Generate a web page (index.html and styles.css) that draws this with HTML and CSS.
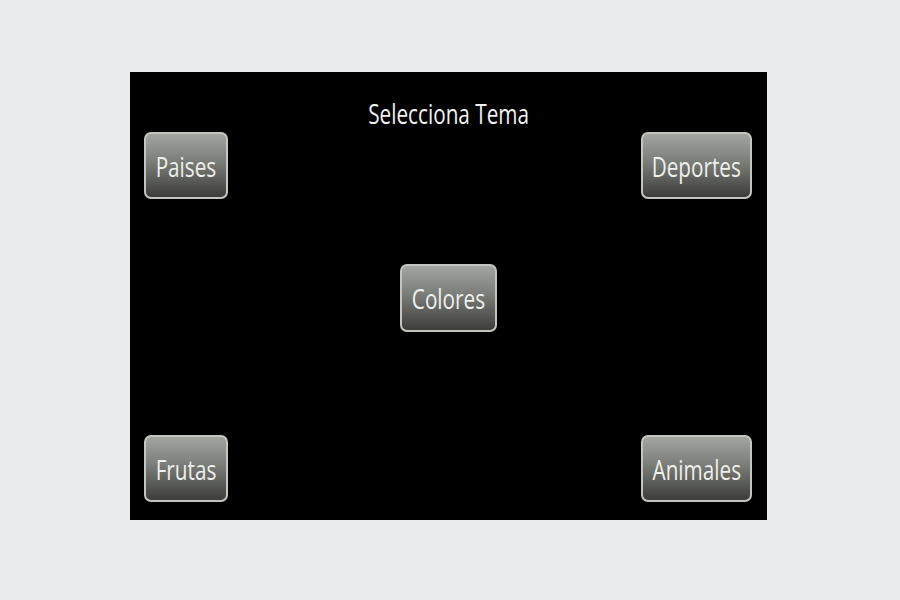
FILE: index.html
```html
<!DOCTYPE html>
<html lang="es">
<head>
<meta charset="utf-8">
<title>Selecciona Tema</title>
<link rel="stylesheet" href="styles.css">
</head>
<body>
<main class="screen">
  <h1 class="title"><span class="squeeze">Selecciona Tema</span></h1>
  <div class="row">
    <button class="btn btn-paises"><span class="squeeze">Paises</span></button>
    <button class="btn btn-deportes"><span class="squeeze">Deportes</span></button>
  </div>
  <div class="row row-center">
    <button class="btn btn-colores"><span class="squeeze">Colores</span></button>
  </div>
  <div class="row row-bottom">
    <button class="btn btn-frutas"><span class="squeeze">Frutas</span></button>
    <button class="btn btn-animales"><span class="squeeze">Animales</span></button>
  </div>
</main>
</body>
</html>
```
FILE: styles.css
```css
html, body {
  margin: 0;
  padding: 0;
  background: #e9eced;
}
body {
  padding: 72px 0 0 130px;
  font-family: "Open Sans", "Noto Sans", sans-serif;
}
.screen {
  width: 637px;
  height: 448px;
  box-sizing: border-box;
  background: #000;
  display: flex;
  flex-direction: column;
  padding: 0 15px 18px 14px;
}
.title {
  margin: 0;
  height: 60px;
  display: flex;
  align-items: center;
  justify-content: center;
  padding-top: 22px;
  padding-left: 2px;
  box-sizing: border-box;
  font-weight: 400;
  font-size: 28px;
  color: #f2f2f2;
  line-height: 1;
}
.squeeze {
  display: inline-block;
  transform: scaleX(0.74);
  white-space: nowrap;
}
.row {
  display: flex;
  justify-content: space-between;
  align-items: flex-start;
}
.row-center {
  justify-content: center;
  margin-top: 65px;
  padding-left: 1px;
}
.row-bottom {
  margin-top: auto;
}
.btn {
  height: 67px;
  box-sizing: border-box;
  border: 2px solid #c3c5c0;
  border-radius: 7px;
  background: linear-gradient(to bottom, #a3a5a0 0%, #7a7c77 45%, #3c3d3a 100%);
  color: #eef0eb;
  font-family: "Open Sans", "Noto Sans", sans-serif;
  font-size: 28px;
  line-height: 1;
  padding: 0;
  display: flex;
  align-items: center;
  justify-content: center;
}
.btn-paises, .btn-frutas { width: 84px; }
.btn-deportes, .btn-animales { width: 111px; }
.btn-colores { width: 97px; height: 68px; }
```
